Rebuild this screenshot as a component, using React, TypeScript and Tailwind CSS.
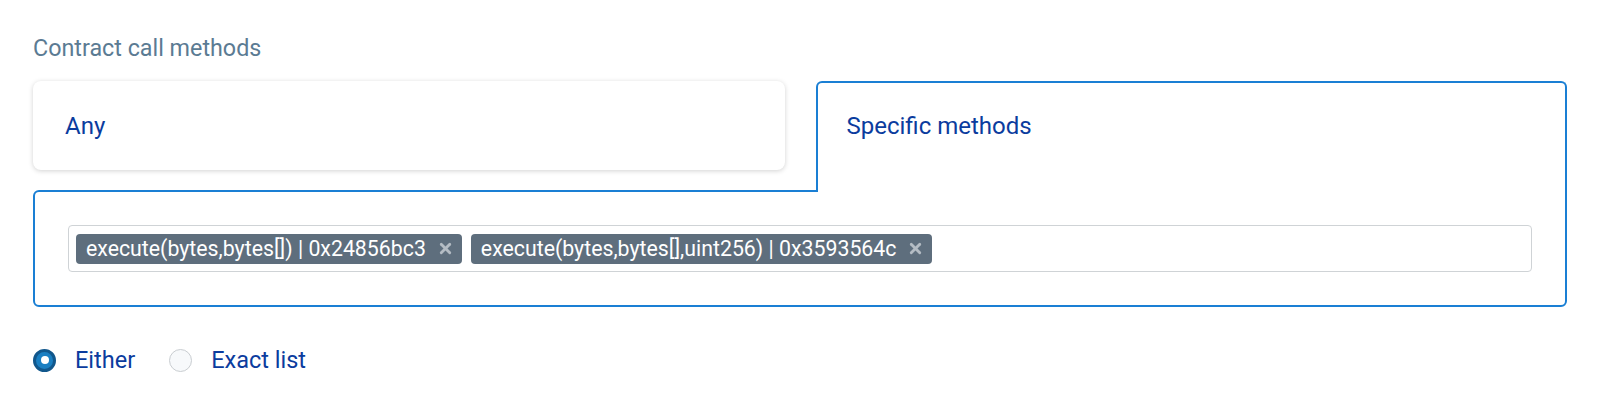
import { X } from 'lucide-react';

const methods = [
  'execute(bytes,bytes[]) | 0x24856bc3',
  'execute(bytes,bytes[],uint256) | 0x3593564c',
];

function Chip({ label }: { label: string }) {
  return (
    <span className="flex h-[30px] items-center gap-[11px] rounded-[4px] bg-[#5e6e7d] pl-[10px] pr-[8px] text-[21.3px] leading-none text-white">
      {label}
      <X className="h-[17px] w-[17px] text-[#b4bcc4]" strokeWidth={4} />
    </span>
  );
}

export default function App() {
  return (
    <div className="bg-white px-[33px] pt-[36px] font-['Roboto',sans-serif]">
      <div className="text-[23.3px] leading-6 text-[#5b7b93]">Contract call methods</div>

      <div className="mt-[21px] grid grid-cols-2 gap-x-[31px]">
        <div className="flex h-[89px] items-center self-start rounded-lg bg-white pl-[32px] text-[24px] text-[#0b3c9e] shadow-[0_1px_5px_rgba(0,0,0,0.18)]">
          Any
        </div>
        <div className="relative z-10 -mb-[2px] h-[111px] rounded-t-md border-2 border-b-0 border-[#1a7fd4] bg-white pl-[29px] pt-[31px] text-[24px] leading-6 text-[#0b3c9e]">
          Specific methods
        </div>
        <div className="col-span-2 rounded-b-md rounded-tl-md border-2 border-[#1a7fd4] px-[33px] py-[33px]">
          <div className="flex h-[47px] items-center gap-[9px] rounded-[4px] border border-[#cfd3d6] px-[7px]">
            {methods.map(m => (
              <Chip key={m} label={m} />
            ))}
          </div>
        </div>
      </div>

      <div className="mt-[41px] flex h-6 items-center text-[23.5px] leading-6 text-[#0b3c9e]">
        <span className="flex h-[23px] w-[23px] items-center justify-center rounded-full border-[3px] border-[#11578c] bg-[#1a7fc2]">
          <span className="h-[8px] w-[8px] rounded-full bg-white" />
        </span>
        <span className="ml-[19px]">Either</span>
        <span className="ml-[34px] h-[23px] w-[23px] rounded-full border border-[#c9cdd1] bg-[#f7f9fb]" />
        <span className="ml-[19px]">Exact list</span>
      </div>
    </div>
  );
}
